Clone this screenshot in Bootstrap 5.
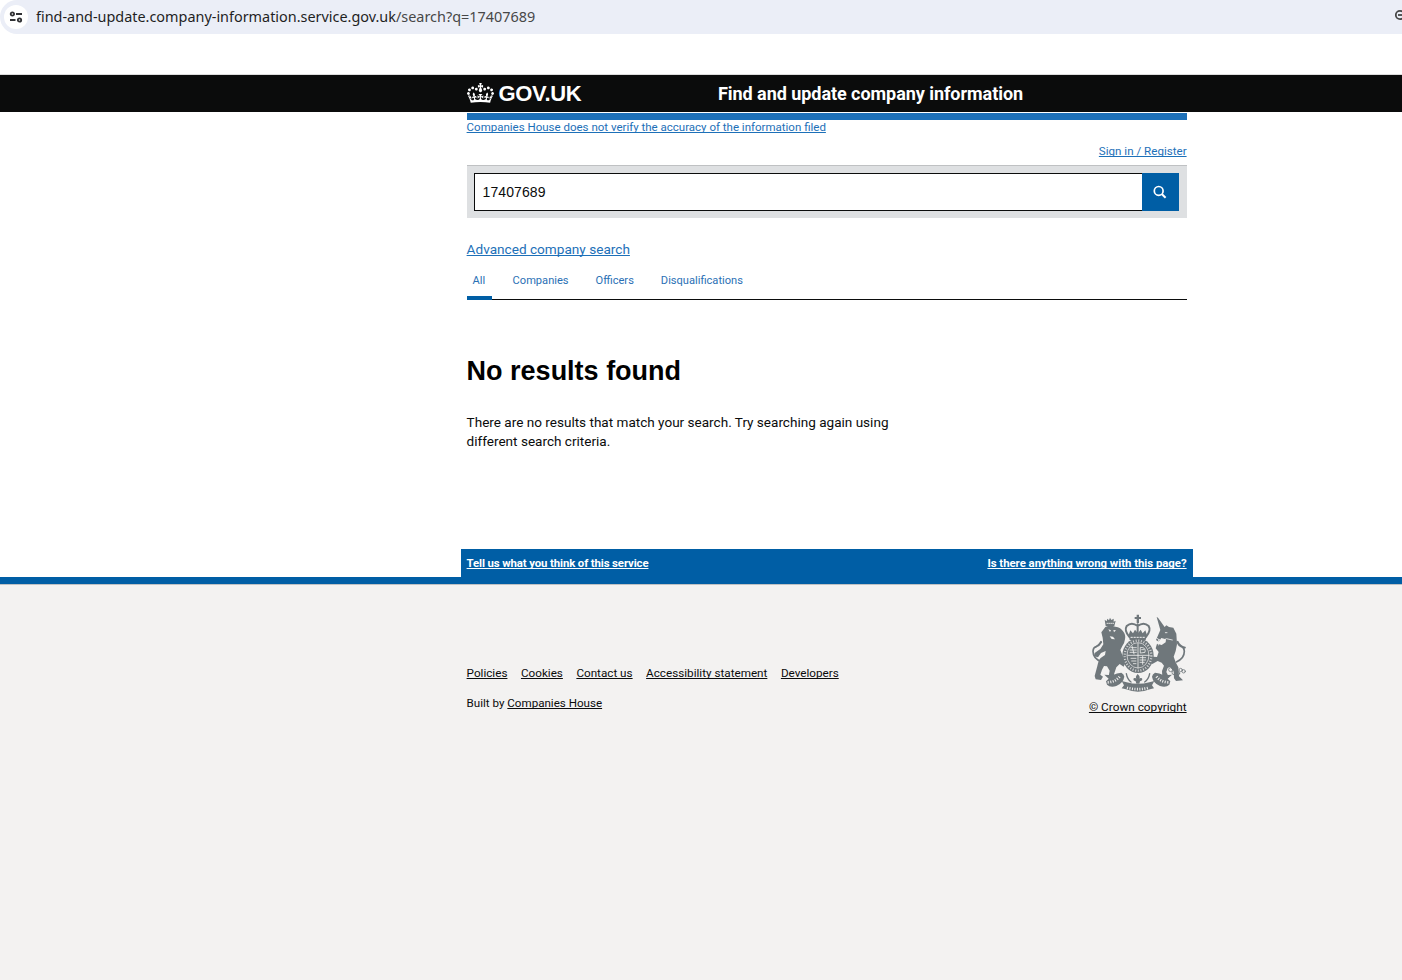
<!DOCTYPE html>
<html lang="en">
<head>
<meta charset="utf-8">
<meta name="viewport" content="width=device-width, initial-scale=1">
<title>Find and update company information - GOV.UK</title>
<link rel="stylesheet" href="https://cdn.jsdelivr.net/npm/bootstrap@5.3.0/dist/css/bootstrap.min.css">
<script defer src="https://cdn.jsdelivr.net/npm/bootstrap@5.3.0/dist/js/bootstrap.bundle.min.js"></script>
<style>
html,body{height:100%}
body{font-family:Roboto,"Liberation Sans",sans-serif;color:#0b0c0c;background:#fff;overflow:hidden}
a{text-decoration-thickness:1px;text-underline-offset:1px;text-decoration-skip-ink:none;white-space:nowrap}
.blue-link{color:#1d70b8}
.browser-bar{height:74px}
.url-pill{height:34px;background:#ebeef7;border-radius:17px 0 0 17px;font-family:"Noto Sans","Open Sans",sans-serif;font-size:14.41px;color:#1f1f1f;padding-left:4px}
.site-info{width:24px;height:24px;background:#fff}
.url-path{color:#474747}
.url-text{margin-left:8px}
.gov-header{height:38px;background:#0b0c0c;border-top:1px solid #dcdcdc;flex:none}
.page-col{width:720px;margin-left:466.6px}
.gov-name{font:700 22px/38px "Liberation Sans",sans-serif;letter-spacing:-.35px;margin-left:5px;width:219.4px}
.gov-header .page-col{height:37px}
.gov-header svg{margin-bottom:2px}
.service-name{font-size:18px;font-weight:700;line-height:38px;letter-spacing:-.05px}
.phase{height:7px;background:#1d70b8;margin-top:1px}
.disclaimer{font-size:11.5px;line-height:14px}
.sign-in{font-size:11.6px;line-height:14px;margin-top:10px}
.search-panel{margin-top:7px;height:53px;padding:7px 8px 7px 7px;background:#dee0e2;border-top:1px solid #bfc1c3}
.search-panel input{height:38px;border:1px solid #0b0c0c;border-right:0;border-radius:0;padding:0 8px;font:14px "Liberation Sans",sans-serif;letter-spacing:.08px;color:#0b0c0c}
.search-btn{width:37px;height:38px;background:#005ea5;border:0;border-radius:0;padding:0 1px 0 0}
.advanced{font-size:13.62px;line-height:20px;margin-top:21px}
.tabs{height:41px;border-bottom:1px solid #0b0c0c;gap:15px;font-size:11.1px}
.tabs a{height:41px;padding:0 6px;line-height:43px;text-decoration:none;color:#2a70b5}
.tabs a.current{width:25px;border-bottom:4px solid #005ea5;margin-bottom:-1px}
.no-results{font:700 27px/32px "Liberation Sans",sans-serif;margin:55px 0 26px;color:#000}
.no-results-text{font-size:13.55px;line-height:19px;margin:0;width:440px}
.feedback{width:732px;height:28px;margin:98px 0 0 460.6px;padding:0 6px;background:#005ea5;font-size:11.4px;font-weight:700;line-height:28px}
.feedback a{color:#fff}
.feedback a:first-child{letter-spacing:-.12px}
.feedback a:last-child{letter-spacing:-.03px}
.gov-footer{border-top:7px solid #005ea5;background:#f3f2f1}
.footer-inner{border-top:1px solid #bfc1c3}
.footer-inner a{color:#0b0c0c}
.footer-links{font-size:11.7px;line-height:14px;gap:13.5px}
.built{font-size:11.6px;line-height:14px;margin-top:16px}
.meta-links{padding-top:81px}
.crest{padding-top:29px;font-size:11.8px;line-height:14px}
.crest svg{margin:0 0 7px 0}
.zoom-glyph{width:7px;height:12px;margin-bottom:4px}
</style>
</head>
<body class="d-flex flex-column">
<div class="browser-bar flex-shrink-0">
  <div class="url-pill d-flex align-items-center">
    <span class="site-info rounded-circle d-flex align-items-center justify-content-center">
      <svg width="14" height="12" viewBox="0 0 14 12" fill="none" stroke="#303134" stroke-width="1.8"><circle cx="3.4" cy="3" r="1.7"/><path d="M7 3h6M1 9h5.5"/><circle cx="10.5" cy="9" r="1.7"/></svg>
    </span>
    <span class="url-text">find-and-update.company-information.service.gov.uk<span class="url-path">/search?q=17407689</span></span>
    <svg class="zoom-glyph ms-auto" viewBox="0 0 7 12" fill="none" stroke="#474747" stroke-width="1.8"><circle cx="5" cy="6" r="4.2"/><path d="M3 6h4"/></svg>
  </div>
</div>
<header class="gov-header">
  <div class="page-col d-flex align-items-center text-white">
    <svg width="27" height="20" viewBox="0 0 132 97" fill="#fff"><path d="M25 30.2c3.5 1.5 7.7-.2 9.1-3.7 1.5-3.6-.2-7.8-3.9-9.2-3.6-1.4-7.6.3-9.1 3.9-1.4 3.5.3 7.5 3.9 9zM9 39.5c3.6 1.5 7.8-.2 9.2-3.7 1.5-3.6-.2-7.8-3.9-9.1-3.6-1.5-7.6.2-9.1 3.8-1.4 3.5.3 7.5 3.8 9zM4.4 57.2c3.5 1.5 7.7-.2 9.1-3.8 1.5-3.6-.2-7.7-3.9-9.1-3.5-1.5-7.6.3-9.1 3.8-1.4 3.5.3 7.6 3.9 9.1zm38.3-21.4c3.5 1.5 7.7-.2 9.1-3.8 1.5-3.6-.2-7.7-3.9-9.1-3.6-1.5-7.6.3-9.1 3.8-1.3 3.6.4 7.7 3.9 9.1zm64.4-5.6c-3.6 1.5-7.8-.2-9.1-3.7-1.5-3.6.2-7.8 3.8-9.2 3.6-1.4 7.7.3 9.2 3.9 1.3 3.5-.4 7.5-3.9 9zm15.9 9.3c-3.6 1.5-7.7-.2-9.1-3.7-1.5-3.6.2-7.8 3.7-9.1 3.6-1.5 7.7.2 9.2 3.8 1.5 3.5-.3 7.5-3.8 9zm4.7 17.7c-3.6 1.5-7.8-.2-9.2-3.8-1.5-3.6.2-7.7 3.9-9.1 3.6-1.5 7.7.3 9.2 3.8 1.3 3.5-.4 7.6-3.9 9.1zM89.3 35.8c-3.6 1.5-7.8-.2-9.2-3.8-1.4-3.6.2-7.7 3.9-9.1 3.6-1.5 7.7.3 9.2 3.8 1.4 3.6-.3 7.7-3.9 9.1zM69.7 17.7l8.9 4.7V9.3l-8.9 2.8c-.2-.3-.5-.6-.9-.9L72.4 0H59.6l3.5 11.2c-.3.3-.6.5-.9.9l-8.8-2.8v13.1l8.8-4.7c.3.3.6.7.9.9l-5 15.4v.1c-.2.8-.4 1.6-.4 2.4 0 4.1 3.1 7.5 7 8.1h.2c.3 0 .7.1 1 .1.4 0 .7 0 1-.1h.2c4-.6 7.1-4.1 7.1-8.1 0-.8-.1-1.7-.4-2.4V34l-5.1-15.4c.4-.2.7-.6 1-.9zM66 92.8c16.9 0 32.8 1.1 47.1 3.2 4-16.9 8.9-26.7 14-33.5l-9.6-3.4c1 4.9 1.1 7.2 0 10.2-1.5-1.4-3-4.3-4.2-8.7L108.6 76c2.8-2 5-3.2 7.5-3.3-4.4 9.4-10 11.9-13.6 11.2-4.3-.8-6.3-4.6-5.6-7.9 1-4.7 5.7-5.9 8-.5 4.3-8.7-3-11.4-7.6-8.8 7.1-7.2 7.9-13.5 2.1-21.1-8 6.1-8.1 12.3-4.5 20.8-4.7-5.4-12.1-2.5-9.5 6.2 3.4-5.2 7.9-2 7.2 3.1-.6 4.3-6.4 7.8-13.5 7.2-10.3-.9-10.9-8-11.2-13.8 2.5-.5 7.1 1.8 11 7.3L80.2 60c-4.1 4.4-8 5.3-12.3 5.4 1.4-4.4 8-11.6 8-11.6H55.5s6.4 7.2 7.9 11.6c-4.2-.1-8-1-12.3-5.4l1.4 16.4c3.9-5.5 8.5-7.7 10.9-7.3-.3 5.8-.9 12.8-11.1 13.8-7.2.6-12.9-2.9-13.5-7.2-.7-5 3.8-8.3 7.1-3.1 2.7-8.7-4.6-11.6-9.4-6.2 3.7-8.5 3.6-14.7-4.6-20.8-5.8 7.6-5 13.9 2.2 21.1-4.7-2.6-11.9.1-7.7 8.8 2.3-5.5 7.1-4.2 8.1.5.7 3.3-1.3 7.1-5.7 7.9-3.5.7-9-1.8-13.5-11.2 2.5.1 4.7 1.3 7.5 3.3l-4.7-15.4c-1.2 4.4-2.7 7.2-4.3 8.7-1.1-3-.9-5.3 0-10.2l-9.5 3.4c5 6.9 9.9 16.7 14 33.5 14.8-2.1 30.8-3.2 47.7-3.2z"/></svg>
    <span class="gov-name">GOV.UK</span>
    <span class="service-name text-nowrap">Find and update company information</span>
  </div>
</header>
<main class="page-col flex-shrink-0">
  <div class="phase"></div>
  <div class="disclaimer d-flex"><a class="blue-link" href="#">Companies House does not verify the accuracy of the information filed</a></div>
  <div class="sign-in d-flex justify-content-end"><a class="blue-link" href="#">Sign in / Register</a></div>
  <form class="search-panel d-flex">
    <input class="flex-grow-1" type="text" value="17407689" aria-label="Search">
    <button class="search-btn d-flex align-items-center justify-content-center" type="button" aria-label="Search">
      <svg width="14" height="14" viewBox="0 0 14 14" fill="none" stroke="#fff"><circle cx="5.7" cy="5.9" r="4.4" stroke-width="1.7"/><path d="M9 9.2l3.6 3.6" stroke-width="2"/></svg>
    </button>
  </form>
  <div class="advanced d-flex"><a class="blue-link" href="#">Advanced company search</a></div>
  <nav class="tabs d-flex">
    <a class="current" href="#">All</a><a href="#">Companies</a><a href="#">Officers</a><a href="#">Disqualifications</a>
  </nav>
  <h1 class="no-results">No results found</h1>
  <p class="no-results-text">There are no results that match your search. Try searching again using different search criteria.</p>
</main>
<div class="feedback d-flex justify-content-between flex-shrink-0"><a href="#">Tell us what you think of this service</a><a href="#">Is there anything wrong with this page?</a></div>
<footer class="gov-footer flex-grow-1">
  <div class="footer-inner">
    <div class="page-col d-flex justify-content-between">
      <div class="meta-links">
        <div class="footer-links d-flex"><a href="#">Policies</a><a href="#">Cookies</a><a href="#">Contact us</a><a href="#">Accessibility statement</a><a href="#">Developers</a></div>
        <div class="built">Built by <a href="#">Companies House</a></div>
      </div>
      <div class="crest d-flex flex-column align-items-end">
        <svg width="96" height="79" viewBox="30 27 288 237" fill="#6f777b" stroke-linecap="round" stroke-linejoin="round">
          <!-- lion -->
          <path d="M71 44l6 5 2-8 5 5 3-8 4 7 7-4v9l6-3-4 16H74z"/>
          <path d="M78 55h20" stroke="#f3f2f1" stroke-width="2.5" stroke-dasharray="3 3"/>
          <path d="M73 66q14-7 30-1 17 2 23 14 9 10 6 24-2 14-8 20l-6 12 7 18 8 20-5 12-12-8-10 10q-4 12-7 21l9 8-9 8-17-5 4-22-8-13-9-1-6 11-5 15 8 6-6 10-16-2-3-10 8-30q3-17 10-24l13-9 2-12-14 6-9 13-12-3 2-10 17-12 9-14-2-20-4-16z"/>
          <path d="M62 171q-26-10-26-32 1-12 9-14 10-3 16-14M60 110q-8 14-20 18" fill="none" stroke="#6f777b" stroke-width="5"/>
          <path d="M82 73l8 3-3 5zM97 75l8 1-6 6zM86 94l10 1 6 8-10-1z" fill="#f3f2f1"/>
          <!-- unicorn -->
          <path d="M227 36l4 2 20 28 5-5 8 5 13 2 9 18 2 32-4 20-6 17 6 17 8 15 2 27 12 12-21 2-6-8-1-22-11-12-7 3-4 12 8 16-9 7-11-6-1-20 6-16-7-9-12-5-16 9-12-14 3-8-7-9 5-9 9 3 4 15 12 1 5-15-9-11 4-14 14 4 12-8 1-9-14-4-8 11-8-5 13-30z"/>
          <path d="M286 171q24-10 24-32-1-12-9-14-8-3-13-14M290 110q6 14 22 18" fill="none" stroke="#6f777b" stroke-width="5"/>
          <path d="M228 100l14 9 14-8 18 4M253 83h5M234 103q-6 8-2 17" fill="none" stroke="#f3f2f1" stroke-width="2.5"/>
          <g fill="none" stroke="#6f777b" stroke-width="2.5"><circle cx="269" cy="194" r="6"/><circle cx="279" cy="203" r="6"/><circle cx="291" cy="205" r="5"/><circle cx="299" cy="195" r="5"/><circle cx="308" cy="199" r="5"/></g>
          <!-- crown -->
          <path d="M167 29h7v7h6v6h-6v12h-7V42h-6v-6h6z"/>
          <path d="M145 96q-16-20-8-33 15-14 33 0 18-14 33 0 8 13-8 33M170 58v30" fill="none" stroke="#6f777b" stroke-width="6"/>
          <path d="M143 90l5-14 8 9 6-11 9 11 8-11 6 11 8-9 5 14-4 15h-48z"/>
          <path d="M150 97h42" stroke="#f3f2f1" stroke-width="3" stroke-dasharray="4 5"/>
          <!-- garter and shield -->
          <ellipse cx="171" cy="152" rx="47" ry="52"/>
          <ellipse cx="171" cy="152" rx="40" ry="45" fill="none" stroke="#f3f2f1" stroke-width="7" stroke-dasharray="3 5" stroke-linecap="butt" opacity=".75"/>
          <ellipse cx="171" cy="151" rx="33" ry="38" fill="none" stroke="#f3f2f1" stroke-width="2"/>
          <g stroke="#f3f2f1" stroke-width="2.4" fill="none"><path d="M171 115v74M140 151h62"/><path d="M149 128h17M147 135h19M147 142h19M177 158h17M177 165h17M177 172h13M150 160h15M152 168h13M157 176h8"/><path d="M179 127q17 0 13 15l-13 2zM182 134h7M153 123l6 24M185 154v24"/></g>
          <!-- scrolls -->
          <path d="M70 209l25 2q13-8 26-8 8 4 9 12-3 19-24 28-18 6-28-4l-3-10 8-8zM273 209l-25 2q-13-8-26-8-8 4-9 12 3 19 24 28 18 6 28-4l3-10-8-8z"/>
          <path d="M80 232q25-1 38-20M262 232q-25-1-37-20" fill="none" stroke="#f3f2f1" stroke-width="8" stroke-dasharray="3 4.5" stroke-linecap="butt"/>
          <path d="M122 228l15 4q34 9 68 0l15-4-7 13 6 9-12 3q-36 14-72 0l-13-3 7-9z"/>
          <path d="M138 248q33 9 66 0" fill="none" stroke="#f3f2f1" stroke-width="8" stroke-dasharray="3 4.5" stroke-linecap="butt"/>
          <path d="M170 207q10 9 4 16 3-6 9-3 3 7-6 9l-2 7h-9l-2-7q-9-2-6-9 6-3 9 3-6-7 3-16z"/>
          <path d="M136 206q3 17 14 25M206 206q-3 17-15 25" fill="none" stroke="#6f777b" stroke-width="4"/>
        </svg>
        <a href="#">© Crown copyright</a>
      </div>
    </div>
  </div>
</footer>
</body>
</html>
